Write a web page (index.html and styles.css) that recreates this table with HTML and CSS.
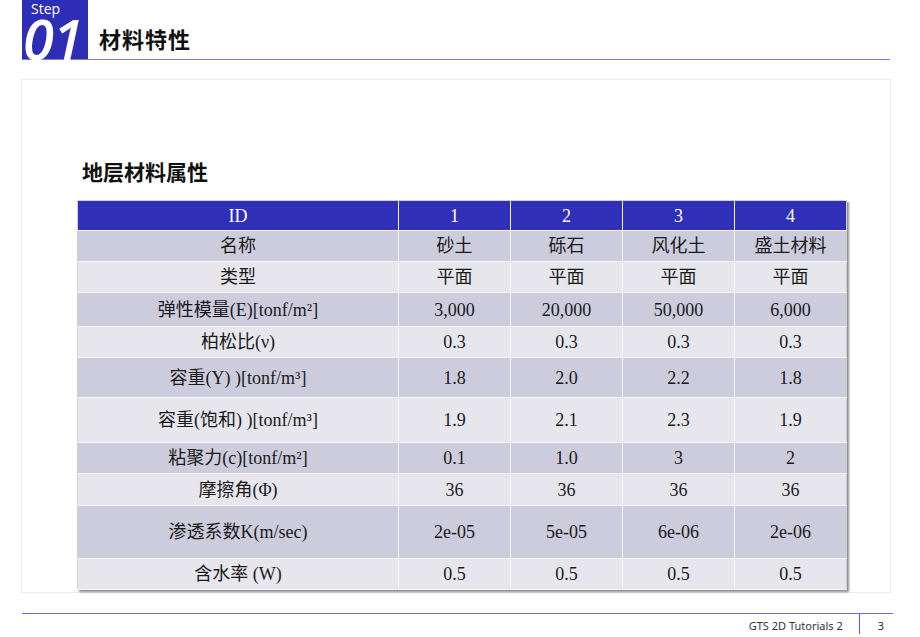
FILE: index.html
```html
<!DOCTYPE html>
<html lang="zh">
<head>
<meta charset="utf-8">
<link rel="stylesheet" href="styles.css">
</head>
<body>
<header class="top">
  <div class="step">
    <span class="step-label">Step</span>
    <span class="step-num">01</span>
  </div>
  <h1 class="title">材料特性</h1>
</header>
<main class="panel">
  <h2 class="heading">地层材料属性</h2>
  <table class="props">
    <colgroup>
      <col class="c-name"><col class="c-val"><col class="c-val"><col class="c-val"><col class="c-val">
    </colgroup>
    <tr class="head h30"><td>ID</td><td>1</td><td>2</td><td>3</td><td>4</td></tr>
    <tr class="dark h31"><td>名称</td><td>砂土</td><td>砾石</td><td>风化土</td><td>盛土材料</td></tr>
    <tr class="light h31"><td>类型</td><td>平面</td><td>平面</td><td>平面</td><td>平面</td></tr>
    <tr class="dark h34"><td>弹性模量(E)[tonf/m²]</td><td>3,000</td><td>20,000</td><td>50,000</td><td>6,000</td></tr>
    <tr class="light h31"><td>柏松比(ν)</td><td>0.3</td><td>0.3</td><td>0.3</td><td>0.3</td></tr>
    <tr class="dark h40"><td>容重(Y) )[tonf/m³]</td><td>1.8</td><td>2.0</td><td>2.2</td><td>1.8</td></tr>
    <tr class="light h45"><td>容重(饱和) )[tonf/m³]</td><td>1.9</td><td>2.1</td><td>2.3</td><td>1.9</td></tr>
    <tr class="dark h31"><td>粘聚力(c)[tonf/m²]</td><td>0.1</td><td>1.0</td><td>3</td><td>2</td></tr>
    <tr class="light h32"><td>摩擦角(Φ)</td><td>36</td><td>36</td><td>36</td><td>36</td></tr>
    <tr class="dark h53"><td>渗透系数K(m/sec)</td><td>2e-05</td><td>5e-05</td><td>6e-06</td><td>2e-06</td></tr>
    <tr class="light h31"><td>含水率 (W)</td><td>0.5</td><td>0.5</td><td>0.5</td><td>0.5</td></tr>
  </table>
</main>
<footer class="foot">
  <span class="foot-text">GTS 2D Tutorials 2</span>
  <span class="foot-page">3</span>
</footer>
</body>
</html>
```
FILE: styles.css
```css
* { box-sizing: border-box; }
html, body { margin: 0; padding: 0; background: #ffffff; }
body { width: 920px; height: 637px; overflow: hidden; font-family: "Noto Sans", "Noto Sans CJK SC", sans-serif; color: #111; }

.top {
  display: flex;
  align-items: stretch;
  margin-left: 22px;
  width: 868px;
  height: 60px;
  border-bottom: 1px solid #7c7cd6;
}
.step {
  width: 66px;
  background: #2d2db6;
  color: #fff;
  display: flex;
  flex-direction: column;
}
.step-label {
  font-family: "Open Sans", sans-serif;
  font-size: 14px;
  line-height: 17px;
  padding: 0 0 0 9px;
}
.step-num {
  display: block;
  margin-top: 1px;
  font-family: "Open Sans", sans-serif;
  font-style: italic;
  font-weight: 600;
  font-size: 56px;
  line-height: 40px;
  letter-spacing: -1px;
  padding-left: 1px;
}
.title {
  margin: 0 0 0 11px;
  align-self: center;
  padding-top: 16px;
  font-family: "Noto Sans CJK SC", sans-serif;
  font-size: 22px;
  font-weight: 700;
  letter-spacing: 1px;
}

.panel {
  margin: 19px 0 0 21px;
  width: 870px;
  height: 514px;
  border: 1px solid #eaefec;
  padding: 79px 0 0 55px;
}
.heading {
  margin: 0 0 17px 5px;
  font-family: "Noto Sans CJK SC", sans-serif;
  font-size: 21px;
  line-height: 24px;
  font-weight: 700;
}

.props {
  border-collapse: collapse;
  width: 770px;
  border: 1px solid #cfcfd4;
  box-shadow: 2px 2px 2px rgba(0, 0, 0, 0.45);
  font-family: "Liberation Serif", "Noto Sans CJK SC", serif;
  font-size: 18px;
  color: #1a1a1a;
}
.c-name { width: 321px; }
.c-val { width: 112px; }
.props td {
  padding: 0;
  text-align: center;
  vertical-align: middle;
  border: 1px solid #f4f4f7;
  line-height: 20px;
}
.props tr td:first-child { border-left: none; }
.props tr td:last-child { border-right: none; }
.head td { background: #2f2fb8; color: #fff; border-top: none; }
.dark td { background: #cdccdd; }
.light td { background: #e6e6ec; }
.h30 { height: 30px; }
.h31 { height: 31px; }
.h32 { height: 32px; }
.h34 { height: 34px; }
.h40 { height: 40px; }
.h45 { height: 45px; }
.h53 { height: 53px; }

.foot {
  margin: 20px 0 0 22px;
  width: 871px;
  border-top: 1px solid #6a6ad2;
  display: flex;
  justify-content: flex-end;
  font-family: "Noto Sans", sans-serif;
  font-size: 11px;
  color: #333;
}
.foot-text {
  padding: 4px 16px 0 0;
  height: 20px;
  border-right: 1px solid #5a5ad0;
}
.foot-page {
  padding: 4px 9px 0 18px;
}
```
